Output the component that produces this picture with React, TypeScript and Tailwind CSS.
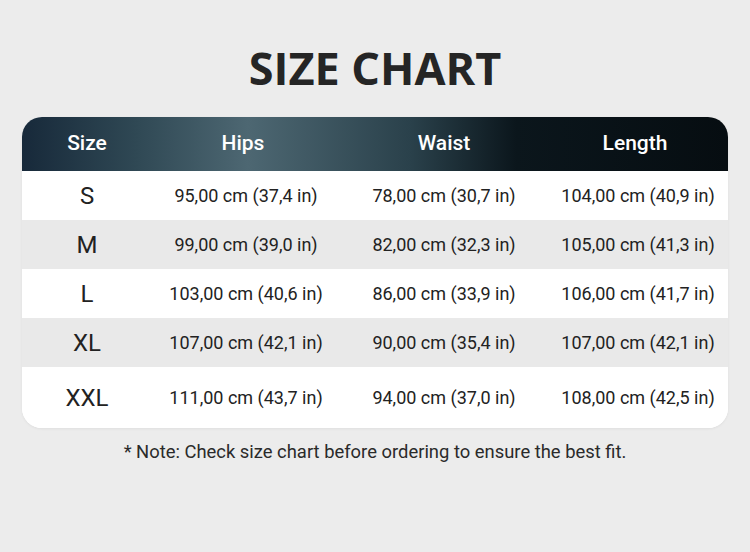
import React from "react";

const rows = [
  { size: "S", hips: "95,00 cm (37,4 in)", waist: "78,00 cm (30,7 in)", length: "104,00 cm (40,9 in)" },
  { size: "M", hips: "99,00 cm (39,0 in)", waist: "82,00 cm (32,3 in)", length: "105,00 cm (41,3 in)" },
  { size: "L", hips: "103,00 cm (40,6 in)", waist: "86,00 cm (33,9 in)", length: "106,00 cm (41,7 in)" },
  { size: "XL", hips: "107,00 cm (42,1 in)", waist: "90,00 cm (35,4 in)", length: "107,00 cm (42,1 in)" },
  { size: "XXL", hips: "111,00 cm (43,7 in)", waist: "94,00 cm (37,0 in)", length: "108,00 cm (42,5 in)" },
];

const cols = "grid grid-cols-[130px_188px_208px_180px] items-center text-center";

export default function App() {
  return (
    <div className="w-[750px] h-[552px] bg-[#ececec] flex flex-col items-center pt-[44px] font-['Roboto',sans-serif] text-[#222]">
      {/* Title */}
      <h1 className="h-[48px] leading-[48px] text-[45px] font-bold text-[#252525] font-['Open_Sans',sans-serif]">
        SIZE CHART
      </h1>

      {/* Table */}
      <div className="mt-[25px] w-[706px] rounded-[20px] overflow-hidden bg-white shadow-[0_1px_3px_rgba(0,0,0,0.06)]">
        <div
          className={`${cols} h-[54px] text-white text-[21px] font-medium bg-[linear-gradient(90deg,#17293a_0%,#2f4854_16%,#4d6772_32%,#2a414b_55%,#0b161c_70%,#060d11_100%)]`}
        >
          <div>Size</div>
          <div className="pr-[6px]">Hips</div>
          <div>Waist</div>
          <div className="pr-[6px]">Length</div>
        </div>
        {rows.map((r, i) => (
          <div
            key={r.size}
            className={`${cols} ${i === rows.length - 1 ? "h-[61px]" : "h-[49px]"} ${
              i % 2 === 1 ? "bg-[#e9e9e9]" : "bg-white"
            } text-[18px]`}
          >
            <div className="text-[24px]">{r.size}</div>
            <div>{r.hips}</div>
            <div>{r.waist}</div>
            <div>{r.length}</div>
          </div>
        ))}
      </div>

      {/* Note */}
      <p className="mt-[12px] leading-[24px] text-[18.4px] text-[#2a2a2a]">
        * Note: Check size chart before ordering to ensure the best fit.
      </p>
    </div>
  );
}
